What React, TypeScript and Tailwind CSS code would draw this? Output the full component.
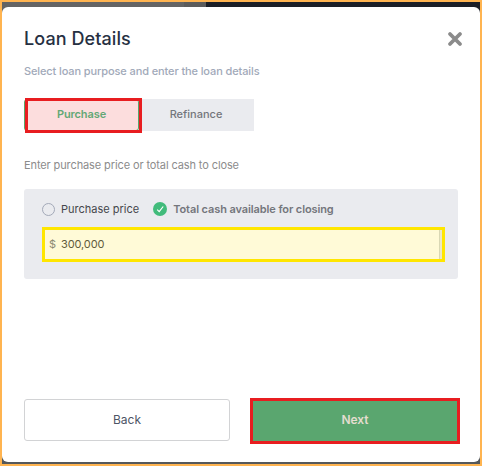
import { useState } from 'react'

type Purpose = 'purchase' | 'refinance'
type PriceMode = 'price' | 'cash'

function CloseIcon() {
  return (
    <svg width="16" height="16" viewBox="0 0 16 16" fill="none" stroke="#8b8b8b" strokeWidth="3.8" strokeLinecap="round">
      <path d="M3 3l10 10M13 3L3 13" />
    </svg>
  )
}

function RadioMark({ checked }: { checked: boolean }) {
  if (!checked) {
    return <span className="block h-[13px] w-[13px] rounded-full border border-[#a3a9b8]" />
  }
  return (
    <svg width="14" height="14" viewBox="0 0 14 14" fill="none">
      <circle cx="7" cy="7" r="7" fill="#41bb7b" />
      <path d="M4.2 7.7l2 2 4-5.2" stroke="#fff" strokeWidth="1.2" />
    </svg>
  )
}

export default function App() {
  const [purpose, setPurpose] = useState<Purpose>('purchase')
  const [mode, setMode] = useState<PriceMode>('cash')
  const [amount, setAmount] = useState('300,000')

  return (
    <div className="h-[466px] w-[482px] overflow-hidden border-2 border-[#ffb450] bg-[linear-gradient(90deg,#646464_0,#646464_182px,#5c5c5c_182px,#5c5c5c_204px,#1b1f27_204px)] font-['Inter',sans-serif]">
      <div className="flex h-full flex-col bg-[linear-gradient(#55585a,#55585a)] bg-[length:100%_12px] bg-bottom bg-no-repeat pt-[5px] pb-[2px]">
        <div className="flex flex-1 flex-col rounded-[6px] bg-white px-[22px] pb-[21px]">
          <div className="mt-[19px] flex h-[26px] items-center justify-between">
            <h1 className="text-[18px] leading-[26px] font-medium tracking-[0.08px] text-[#263042]">Loan Details</h1>
            <button className="mr-[-5px]" aria-label="Close">
              <CloseIcon />
            </button>
          </div>
          <p className="mt-[11px] text-[11px] leading-4 font-medium tracking-[-0.11px] text-[#a1a9b9]">
            Select loan purpose and enter the loan details
          </p>

          {/* Loan purpose */}
          <div className="mt-5 flex h-8 w-[230px]">
            <button
              onClick={() => setPurpose('purchase')}
              className="relative w-[115px] rounded-[3px] border border-[#58a66c] bg-[#fcdddd] pb-[2px] text-[11px] font-semibold tracking-[-0.1px] text-[#63a875]"
            >
              Purchase
              {purpose === 'purchase' && (
                <span className="absolute -top-[2px] -right-[4px] -bottom-[3px] left-0 border-[3px] border-[#e81d20]" />
              )}
            </button>
            <button
              onClick={() => setPurpose('refinance')}
              className="w-[115px] bg-[#eaebef] pr-[1px] pb-[2px] text-[11px] font-medium text-[#74767c]"
            >
              Refinance
            </button>
          </div>

          <p className="mt-[26px] text-[11px] leading-4 tracking-[-0.11px] text-[#8c8c8c]">
            Enter purchase price or total cash to close
          </p>

          {/* Amount */}
          <div className="mt-4 h-[90px] rounded-[3px] bg-[#eaebef] px-[18px] pt-3">
            <div className="flex h-4 items-center text-[11px]">
              <button onClick={() => setMode('price')} className="flex items-center gap-[6px] text-[#45474c]">
                <RadioMark checked={mode === 'price'} />
                Purchase price
              </button>
              <button
                onClick={() => setMode('cash')}
                className="ml-[14px] flex items-center gap-[6px] font-semibold tracking-[-0.1px] text-[#74767c]"
              >
                <RadioMark checked={mode === 'cash'} />
                Total cash available for closing
              </button>
            </div>
            <label className="mt-[10px] mr-[-5px] flex h-[35px] items-center border-[3px] border-[#ffe600] bg-[#fffad7] pl-1 text-[11px] tracking-[-0.1px] text-[#8b8972]">
              $
              <input
                value={amount}
                onChange={(e) => setAmount(e.target.value)}
                className="ml-[5px] h-full min-w-0 flex-1 border-r border-[#d9d7b4] pb-[2px] tracking-[-0.1px] text-[#5f5c3c] outline-none"
              />
              <span className="h-full w-[2px] bg-[#ece8c6]" />
            </label>
          </div>

          {/* Actions */}
          <div className="mt-auto flex h-[42px] items-stretch gap-[22px]">
            <button className="w-[206px] rounded-[3px] border border-[#d2d3d5] pb-[1px] text-[12px] text-[#4d5566]">
              Back
            </button>
            <button className="relative w-[206px] bg-[#5aa66f] pb-[1px] text-[12px] font-semibold text-[#e4ddd0]">
              Next
              <span className="absolute -top-[1px] -right-[2px] -bottom-[3px] -left-[2px] border-[3px] border-[#e81d20]" />
            </button>
          </div>
        </div>
      </div>
    </div>
  )
}
